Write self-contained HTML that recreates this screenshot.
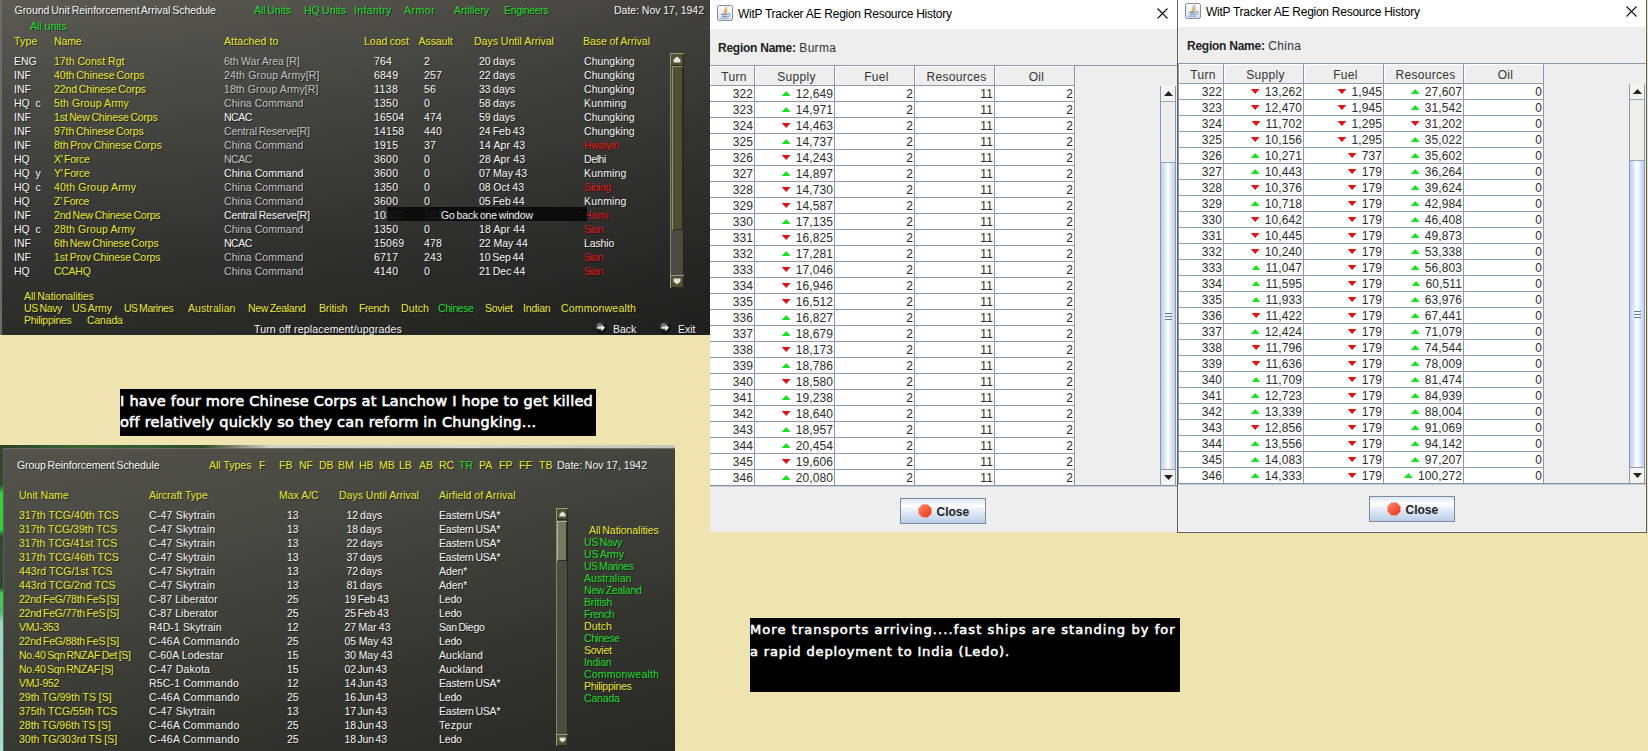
<!DOCTYPE html>
<html><head><meta charset="utf-8"><title>Reinforcements</title><style>
html,body{margin:0;padding:0}
body{width:1648px;height:751px;overflow:hidden;background:#efe3b0;position:relative;font-family:"Liberation Sans",sans-serif}
.a{position:absolute}
.g{position:absolute;white-space:pre;font:10.5px "Liberation Sans",sans-serif;line-height:14px;color:#f6f6f6;text-shadow:1px 1px 0 rgba(0,0,0,.55)}
.y{color:#e9e930}
.gn{color:#22dc2a}
.r{color:#e01818}
.dim{color:#c2c2c2}
#p1{left:0;top:0;width:710px;height:335px;background:linear-gradient(90deg,rgba(0,0,0,0) 0%,rgba(0,0,0,.1) 50%,rgba(0,0,0,.27) 100%),linear-gradient(180deg,#5b5a53 0%,#4d4d48 25%,#41413e 50%,#333332 78%,#2b2b2a 100%);overflow:hidden}
#p2{left:3px;top:448px;width:672px;height:303px;background:linear-gradient(165deg,#54544d 0%,#464640 35%,#34342f 70%,#272725 100%);overflow:hidden;border-top:1px solid #6c6c64;border-left:1px solid #60605a;box-sizing:border-box}
.cm{position:absolute;background:#000;color:#fff;white-space:nowrap;overflow:hidden}
.cm span{position:absolute;left:0}
.win{position:absolute;background:#eeeeee;overflow:hidden}
.tb{position:absolute;left:0;top:0;right:0;background:#fff}
.tt{position:absolute;white-space:nowrap;font:12px/16px "Liberation Sans",sans-serif;color:#000;letter-spacing:-0.26px}
.rn{position:absolute;white-space:nowrap;font:12px/16px "Liberation Sans",sans-serif;color:#333;letter-spacing:.3px}
.rn b{color:#222;letter-spacing:-0.25px}
table.t{position:absolute;border-collapse:collapse;font:12px/13px "Liberation Sans",sans-serif;color:#2c2c2c;table-layout:fixed;letter-spacing:.1px}
table.t td,table.t th{border:1px solid #8c9ab0;height:13px;padding:2px 1px 0 0;text-align:right;background:#fff;overflow:hidden;white-space:nowrap;font-weight:normal}
table.t th{text-align:center;background:#eeeeee;height:16px;padding:3px 0 0 4px;line-height:16px;color:#333;box-shadow:inset 1px 1px 0 #fff;letter-spacing:.3px}
.up,.dn{display:inline-block;width:9px;height:5px;vertical-align:2px;margin-right:5px}
.up{background:#1ee01e;clip-path:polygon(50% 0,100% 100%,0 100%)}
.dn{background:#e01414;clip-path:polygon(0 0,100% 0,50% 100%)}
.sb{position:absolute;width:14px;background:linear-gradient(90deg,#b9cdee,#e4ecf8 30%,#ffffff 50%,#dce6f6 75%,#bccfee);border-left:1px solid #8c9ab0;border-right:1px solid #8c9ab0}
.btn{position:absolute;width:84px;height:24px;border:1px solid #7b8a9b;background:linear-gradient(#dde6f3 0%,#ffffff 28%,#e6edf7 50%,#b9cde9 100%);font:bold 12px/24px "Liberation Sans",sans-serif;color:#222;white-space:nowrap}
</style></head><body>
<div id="p1" class="a">
<div class="a" style="left:0;top:0;width:2px;height:335px;background:#6c6b66"></div><span class="g" style="left:14.5px;top:3px;word-spacing:-1.00px;letter-spacing:-0.03px">Ground Unit Reinforcement Arrival Schedule</span><span class="g gn" style="left:254px;top:3px;word-spacing:-1.00px;letter-spacing:-0.06px">All Units</span><span class="g gn" style="left:304px;top:3px;word-spacing:-0.59px">HQ Units</span><span class="g gn" style="left:354px;top:3px;letter-spacing:0.31px">Infantry</span><span class="g gn" style="left:404px;top:3px;letter-spacing:0.53px">Armor</span><span class="g gn" style="left:454px;top:3px">Artillery</span><span class="g gn" style="left:504px;top:3px;letter-spacing:-0.31px">Engineers</span><span class="g" style="left:614px;top:3px;word-spacing:-0.16px">Date: Nov 17, 1942</span><span class="g gn" style="left:30px;top:19px">All units</span><span class="g y" style="left:14px;top:34px;letter-spacing:0.18px">Type</span><span class="g y" style="left:54px;top:34px;letter-spacing:-0.13px">Name</span><span class="g y" style="left:224px;top:34px;letter-spacing:0.12px">Attached to</span><span class="g y" style="left:364px;top:34px;word-spacing:-0.55px">Load cost</span><span class="g y" style="left:418.5px;top:34px;letter-spacing:-0.06px">Assault</span><span class="g y" style="left:474px;top:34px">Days Until Arrival</span><span class="g y" style="left:583px;top:34px;word-spacing:-0.35px">Base of Arrival</span><span class="g" style="left:14px;top:54px">ENG</span><span class="g y" style="left:54px;top:54px;letter-spacing:0.03px">17th Const Rgt</span><span class="g dim" style="left:224px;top:54px;word-spacing:-0.49px">6th War Area [R]</span><span class="g" style="left:374px;top:54px;letter-spacing:0.21px">764</span><span class="g" style="left:424px;top:54px;letter-spacing:0.21px">2</span><span class="g" style="left:479px;top:54px;word-spacing:-0.53px">20 days</span><span class="g" style="left:584px;top:54px;letter-spacing:0.06px">Chungking</span>
<span class="g" style="left:14px;top:68px">INF</span><span class="g y" style="left:54px;top:68px;word-spacing:-1.00px;letter-spacing:-0.02px">40th Chinese Corps</span><span class="g dim" style="left:224px;top:68px;letter-spacing:0.16px">24th Group Army[R]</span><span class="g" style="left:374px;top:68px;letter-spacing:0.21px">6849</span><span class="g" style="left:424px;top:68px;letter-spacing:0.21px">257</span><span class="g" style="left:479px;top:68px;word-spacing:-0.53px">22 days</span><span class="g" style="left:584px;top:68px;letter-spacing:0.06px">Chungking</span>
<span class="g" style="left:14px;top:82px">INF</span><span class="g y" style="left:54px;top:82px;word-spacing:-1.00px;letter-spacing:-0.11px">22nd Chinese Corps</span><span class="g dim" style="left:224px;top:82px;letter-spacing:0.09px">18th Group Army[R]</span><span class="g" style="left:374px;top:82px;letter-spacing:0.40px">1138</span><span class="g" style="left:424px;top:82px;letter-spacing:0.21px">56</span><span class="g" style="left:479px;top:82px;word-spacing:-0.53px">33 days</span><span class="g" style="left:584px;top:82px;letter-spacing:0.06px">Chungking</span>
<span class="g" style="left:14px;top:96px">HQ  c</span><span class="g y" style="left:54px;top:96px;letter-spacing:0.10px">5th Group Army</span><span class="g dim" style="left:224px;top:96px;letter-spacing:0.05px">China Command</span><span class="g" style="left:374px;top:96px;letter-spacing:0.21px">1350</span><span class="g" style="left:424px;top:96px;letter-spacing:0.21px">0</span><span class="g" style="left:479px;top:96px;word-spacing:-0.53px">58 days</span><span class="g" style="left:584px;top:96px;letter-spacing:0.15px">Kunming</span>
<span class="g" style="left:14px;top:110px">INF</span><span class="g y" style="left:54px;top:110px;word-spacing:-1.00px;letter-spacing:-0.18px">1st New Chinese Corps</span><span class="g" style="left:224px;top:110px;letter-spacing:-0.50px">NCAC</span><span class="g" style="left:374px;top:110px;letter-spacing:0.21px">16504</span><span class="g" style="left:424px;top:110px;letter-spacing:0.21px">474</span><span class="g" style="left:479px;top:110px;word-spacing:-0.53px">59 days</span><span class="g" style="left:584px;top:110px;letter-spacing:0.06px">Chungking</span>
<span class="g" style="left:14px;top:124px">INF</span><span class="g y" style="left:54px;top:124px;word-spacing:-1.00px;letter-spacing:-0.06px">97th Chinese Corps</span><span class="g dim" style="left:224px;top:124px;word-spacing:-1.00px;letter-spacing:-0.14px">Central Reserve[R]</span><span class="g" style="left:374px;top:124px;letter-spacing:0.21px">14158</span><span class="g" style="left:424px;top:124px;letter-spacing:0.21px">440</span><span class="g" style="left:479px;top:124px;word-spacing:-0.90px">24 Feb 43</span><span class="g" style="left:584px;top:124px;letter-spacing:0.06px">Chungking</span>
<span class="g" style="left:14px;top:138px">INF</span><span class="g y" style="left:54px;top:138px;word-spacing:-1.00px;letter-spacing:-0.04px">8th Prov Chinese Corps</span><span class="g dim" style="left:224px;top:138px;letter-spacing:0.05px">China Command</span><span class="g" style="left:374px;top:138px;letter-spacing:0.21px">1915</span><span class="g" style="left:424px;top:138px;letter-spacing:0.21px">37</span><span class="g" style="left:479px;top:138px;letter-spacing:0.14px">14 Apr 43</span><span class="g r" style="left:584px;top:138px;letter-spacing:-0.22px">Hwaiyin</span>
<span class="g" style="left:14px;top:152px">HQ</span><span class="g y" style="left:54px;top:152px;word-spacing:-1.00px;letter-spacing:-0.28px">X&#x27; Force</span><span class="g dim" style="left:224px;top:152px;letter-spacing:-0.50px">NCAC</span><span class="g" style="left:374px;top:152px;letter-spacing:0.21px">3600</span><span class="g" style="left:424px;top:152px;letter-spacing:0.21px">0</span><span class="g" style="left:479px;top:152px;letter-spacing:0.14px">28 Apr 43</span><span class="g" style="left:584px;top:152px;letter-spacing:-0.39px">Delhi</span>
<span class="g" style="left:14px;top:166px">HQ  y</span><span class="g y" style="left:54px;top:166px;word-spacing:-1.00px;letter-spacing:-0.28px">Y&#x27; Force</span><span class="g" style="left:224px;top:166px;letter-spacing:0.05px">China Command</span><span class="g" style="left:374px;top:166px;letter-spacing:0.21px">3600</span><span class="g" style="left:424px;top:166px;letter-spacing:0.21px">0</span><span class="g" style="left:479px;top:166px;word-spacing:-0.52px">07 May 43</span><span class="g" style="left:584px;top:166px;letter-spacing:0.15px">Kunming</span>
<span class="g" style="left:14px;top:180px">HQ  c</span><span class="g y" style="left:54px;top:180px;letter-spacing:0.19px">40th Group Army</span><span class="g dim" style="left:224px;top:180px;letter-spacing:0.05px">China Command</span><span class="g" style="left:374px;top:180px;letter-spacing:0.21px">1350</span><span class="g" style="left:424px;top:180px;letter-spacing:0.21px">0</span><span class="g" style="left:479px;top:180px;word-spacing:-0.27px">08 Oct 43</span><span class="g r" style="left:584px;top:180px;letter-spacing:-0.37px">Sining</span>
<span class="g" style="left:14px;top:194px">HQ</span><span class="g y" style="left:54px;top:194px;word-spacing:-1.00px;letter-spacing:-0.27px">Z&#x27; Force</span><span class="g dim" style="left:224px;top:194px;letter-spacing:0.05px">China Command</span><span class="g" style="left:374px;top:194px;letter-spacing:0.21px">3600</span><span class="g" style="left:424px;top:194px;letter-spacing:0.21px">0</span><span class="g" style="left:479px;top:194px;word-spacing:-0.90px">05 Feb 44</span><span class="g" style="left:584px;top:194px;letter-spacing:0.15px">Kunming</span>
<span class="g" style="left:14px;top:208px">INF</span><span class="g y" style="left:54px;top:208px;word-spacing:-1.00px;letter-spacing:-0.21px">2nd New Chinese Corps</span><span class="g" style="left:224px;top:208px;word-spacing:-1.00px;letter-spacing:-0.14px">Central Reserve[R]</span><span class="g" style="left:374px;top:208px;letter-spacing:0.21px">10302</span><span class="g" style="left:424px;top:208px;letter-spacing:0.21px">182</span><span class="g" style="left:479px;top:208px">27 Feb 44</span><span class="g r" style="left:584px;top:208px">Hami</span>
<span class="g" style="left:14px;top:222px">HQ  c</span><span class="g y" style="left:54px;top:222px;letter-spacing:0.14px">28th Group Army</span><span class="g dim" style="left:224px;top:222px;letter-spacing:0.05px">China Command</span><span class="g" style="left:374px;top:222px;letter-spacing:0.21px">1350</span><span class="g" style="left:424px;top:222px;letter-spacing:0.21px">0</span><span class="g" style="left:479px;top:222px;letter-spacing:0.14px">18 Apr 44</span><span class="g r" style="left:584px;top:222px;letter-spacing:-0.50px">Sian</span>
<span class="g" style="left:14px;top:236px">INF</span><span class="g y" style="left:54px;top:236px;word-spacing:-1.00px;letter-spacing:-0.16px">6th New Chinese Corps</span><span class="g" style="left:224px;top:236px;letter-spacing:-0.50px">NCAC</span><span class="g" style="left:374px;top:236px;letter-spacing:0.21px">15069</span><span class="g" style="left:424px;top:236px;letter-spacing:0.21px">478</span><span class="g" style="left:479px;top:236px;word-spacing:-0.14px">22 May 44</span><span class="g" style="left:584px;top:236px;letter-spacing:-0.12px">Lashio</span>
<span class="g" style="left:14px;top:250px">INF</span><span class="g y" style="left:54px;top:250px;word-spacing:-1.00px;letter-spacing:-0.06px">1st Prov Chinese Corps</span><span class="g dim" style="left:224px;top:250px;letter-spacing:0.05px">China Command</span><span class="g" style="left:374px;top:250px;letter-spacing:0.21px">6717</span><span class="g" style="left:424px;top:250px;letter-spacing:0.21px">243</span><span class="g" style="left:479px;top:250px;word-spacing:-1.00px;letter-spacing:-0.10px">10 Sep 44</span><span class="g r" style="left:584px;top:250px;letter-spacing:-0.50px">Sian</span>
<span class="g" style="left:14px;top:264px">HQ</span><span class="g y" style="left:54px;top:264px;letter-spacing:-0.28px">CCAHQ</span><span class="g dim" style="left:224px;top:264px;letter-spacing:0.05px">China Command</span><span class="g" style="left:374px;top:264px;letter-spacing:0.21px">4140</span><span class="g" style="left:424px;top:264px;letter-spacing:0.21px">0</span><span class="g" style="left:479px;top:264px;word-spacing:-0.81px">21 Dec 44</span><span class="g r" style="left:584px;top:264px;letter-spacing:-0.50px">Sian</span>
<div class="a" style="left:387px;top:207px;width:200px;height:14px;background:rgba(8,8,8,.9)"></div><span class="g" style="left:441px;top:208px;word-spacing:-1.00px;letter-spacing:-0.14px">Go back one window</span><div class="a" style="left:670px;top:53px;width:14px;height:235px;background:#4b4b41;box-shadow:inset 1px 0 0 #83846c,inset -1px 0 0 #26271b"></div><div class="a" style="left:670px;top:53px;width:14px;height:13px;background:#4f522f;box-shadow:inset 1px 1px 0 #9a9b84,inset -1px -1px 0 #26271b"></div><div class="a" style="left:670px;top:275px;width:14px;height:13px;background:#4f522f;box-shadow:inset 1px 1px 0 #9a9b84,inset -1px -1px 0 #26271b"></div><div class="a" style="left:672px;top:66px;width:11px;height:164px;background:#4d502c;box-shadow:inset 1px 1px 0 #8e8f76,inset -1px -1px 0 #2b2c1d"></div><svg class="a" style="left:673px;top:56px" width="8" height="7" viewBox="0 0 8 7"><path d="M0.5 6.5 V3.5 L4 0.5 L7.5 3.5 V6.5 Z" fill="#e4e4dc"/></svg><svg class="a" style="left:673px;top:278px" width="8" height="7" viewBox="0 0 8 7"><path d="M0.5 0.5 V3.5 L4 6.5 L7.5 3.5 V0.5 Z" fill="#e4e4dc"/></svg><span class="g y" style="left:24px;top:289px;word-spacing:-1.00px;letter-spacing:-0.06px">All Nationalities</span><span class="g y" style="left:24px;top:301px;word-spacing:-1.00px;letter-spacing:-0.35px">US Navy</span><span class="g y" style="left:72px;top:301px;word-spacing:-1.00px;letter-spacing:-0.06px">US Army</span><span class="g y" style="left:124px;top:301px;word-spacing:-1.00px;letter-spacing:-0.46px">US Marines</span><span class="g y" style="left:188px;top:301px;letter-spacing:0.08px">Australian</span><span class="g y" style="left:248px;top:301px;word-spacing:-1.00px;letter-spacing:-0.31px">New Zealand</span><span class="g y" style="left:319px;top:301px;letter-spacing:-0.13px">British</span><span class="g y" style="left:359px;top:301px;letter-spacing:-0.41px">French</span><span class="g y" style="left:401px;top:301px;letter-spacing:0.11px">Dutch</span><span class="g gn" style="left:438px;top:301px;letter-spacing:-0.43px">Chinese</span><span class="g y" style="left:485px;top:301px;letter-spacing:-0.24px">Soviet</span><span class="g y" style="left:523px;top:301px;letter-spacing:-0.18px">Indian</span><span class="g y" style="left:561px;top:301px;letter-spacing:0.17px">Commonwealth</span><span class="g y" style="left:24px;top:313px;letter-spacing:-0.30px">Philippines</span><span class="g y" style="left:87px;top:313px;letter-spacing:-0.17px">Canada</span><span class="g" style="left:254px;top:322px;letter-spacing:0.17px">Turn off replacement/upgrades</span><span class="g" style="left:613px;top:322px">Back</span><span class="g" style="left:678px;top:322px">Exit</span><svg width="0" height="0" style="position:absolute"><defs><radialGradient id="sph" cx="35%" cy="25%" r="75%"><stop offset="0" stop-color="#8a8a8a"/><stop offset="0.45" stop-color="#2a2a2a"/><stop offset="1" stop-color="#050505"/></radialGradient></defs></svg><svg class="a" style="left:594.5px;top:322px" width="12" height="12" viewBox="0 0 12 12"><circle cx="6" cy="6" r="5.8" fill="url(#sph)"/><path d="M2.2 4.8 H6.2 V2.4 L10.2 5.8 L6.2 9.2 V6.8 H2.2 Z" fill="#ededed"/></svg><svg class="a" style="left:658.5px;top:322px" width="12" height="12" viewBox="0 0 12 12"><circle cx="6" cy="6" r="5.8" fill="url(#sph)"/><path d="M2.2 4.8 H6.2 V2.4 L10.2 5.8 L6.2 9.2 V6.8 H2.2 Z" fill="#ededed"/></svg></div>
<div class="cm" style="left:120px;top:389px;width:476px;height:47px;font:14.5px/21px 'DejaVu Sans','Liberation Sans',sans-serif;-webkit-text-stroke:0.6px #fff"><span style="top:2px;letter-spacing:0.25px">I have four more Chinese Corps at Lanchow I hope to get killed</span><span style="top:23px;letter-spacing:0.24px">off relatively quickly so they can reform in Chungking...</span></div>
<div class="a" style="left:0;top:445px;width:675px;height:4px;background:linear-gradient(90deg,#2c3f26 0,#3c6434 12%,#2f4a2a 30%,#7f8a72 35%,#cfcfc6 40%,#d6d5cb 70%,#c4c4ba 100%)"></div><div class="a" style="left:0;top:448px;width:4px;height:303px;background:linear-gradient(180deg,#2f4a2a 0,#2f4a2a 12%,#2fd23a 15%,#2fd23a 27%,#2c4a2c 29%,#2c4a2c 46%,#3ad24a 48%,#59b86a 54%,#9fd6c8 58%,#a6dccf 100%)"></div><div id="p2" class="a">
<span class="g" style="left:13px;top:9px;word-spacing:-1.00px;letter-spacing:-0.09px">Group Reinforcement Schedule</span><span class="g y" style="left:205px;top:9px">All Types</span><span class="g y" style="left:255px;top:9px">F</span><span class="g y" style="left:275px;top:9px">FB</span><span class="g y" style="left:295px;top:9px">NF</span><span class="g y" style="left:315px;top:9px">DB</span><span class="g y" style="left:334px;top:9px">BM</span><span class="g y" style="left:355px;top:9px">HB</span><span class="g y" style="left:375px;top:9px">MB</span><span class="g y" style="left:395px;top:9px">LB</span><span class="g y" style="left:415px;top:9px">AB</span><span class="g y" style="left:435px;top:9px">RC</span><span class="g gn" style="left:455px;top:9px">TR</span><span class="g y" style="left:475px;top:9px">PA</span><span class="g y" style="left:495px;top:9px">FP</span><span class="g y" style="left:515px;top:9px">FF</span><span class="g y" style="left:535px;top:9px">TB</span><span class="g" style="left:553px;top:9px;word-spacing:-0.16px">Date: Nov 17, 1942</span><span class="g y" style="left:15px;top:39px">Unit Name</span><span class="g y" style="left:145px;top:39px">Aircraft Type</span><span class="g y" style="left:275px;top:39px">Max A/C</span><span class="g y" style="left:335px;top:39px">Days Until Arrival</span><span class="g y" style="left:435px;top:39px;letter-spacing:0.04px">Airfield of Arrival</span><span class="g y" style="left:15px;top:59px;letter-spacing:0.09px">317th TCG/40th TCS</span><span class="g" style="left:145px;top:59px;letter-spacing:0.20px">C-47 Skytrain</span><span class="g" style="left:283px;top:59px">13</span><span class="g" style="left:342.5px;top:59px;word-spacing:-0.98px">12 days</span><span class="g" style="left:435px;top:59px;word-spacing:-1.00px;letter-spacing:-0.21px">Eastern USA*</span>
<span class="g y" style="left:15px;top:73px;word-spacing:-0.02px">317th TCG/39th TCS</span><span class="g" style="left:145px;top:73px;letter-spacing:0.20px">C-47 Skytrain</span><span class="g" style="left:283px;top:73px">13</span><span class="g" style="left:342.5px;top:73px;word-spacing:-0.98px">18 days</span><span class="g" style="left:435px;top:73px;word-spacing:-1.00px;letter-spacing:-0.21px">Eastern USA*</span>
<span class="g y" style="left:15px;top:87px;letter-spacing:0.03px">317th TCG/41st TCS</span><span class="g" style="left:145px;top:87px;letter-spacing:0.20px">C-47 Skytrain</span><span class="g" style="left:283px;top:87px">13</span><span class="g" style="left:342.5px;top:87px;word-spacing:-0.53px">22 days</span><span class="g" style="left:435px;top:87px;word-spacing:-1.00px;letter-spacing:-0.21px">Eastern USA*</span>
<span class="g y" style="left:15px;top:101px;letter-spacing:0.09px">317th TCG/46th TCS</span><span class="g" style="left:145px;top:101px;letter-spacing:0.20px">C-47 Skytrain</span><span class="g" style="left:283px;top:101px">13</span><span class="g" style="left:342.5px;top:101px;word-spacing:-0.98px">37 days</span><span class="g" style="left:435px;top:101px;word-spacing:-1.00px;letter-spacing:-0.21px">Eastern USA*</span>
<span class="g y" style="left:15px;top:115px;letter-spacing:0.07px">443rd TCG/1st TCS</span><span class="g" style="left:145px;top:115px;letter-spacing:0.20px">C-47 Skytrain</span><span class="g" style="left:283px;top:115px">13</span><span class="g" style="left:342.5px;top:115px;word-spacing:-0.98px">72 days</span><span class="g" style="left:435px;top:115px;letter-spacing:-0.08px">Aden*</span>
<span class="g y" style="left:15px;top:129px;letter-spacing:0.04px">443rd TCG/2nd TCS</span><span class="g" style="left:145px;top:129px;letter-spacing:0.20px">C-47 Skytrain</span><span class="g" style="left:283px;top:129px">13</span><span class="g" style="left:342.5px;top:129px;word-spacing:-0.98px">81 days</span><span class="g" style="left:435px;top:129px;letter-spacing:-0.08px">Aden*</span>
<span class="g y" style="left:15px;top:143px;word-spacing:-1.00px;letter-spacing:-0.24px">22nd FeG/78th FeS [S]</span><span class="g" style="left:145px;top:143px;letter-spacing:0.10px">C-87 Liberator</span><span class="g" style="left:283px;top:143px">25</span><span class="g" style="left:340.5px;top:143px;word-spacing:-1.00px;letter-spacing:-0.13px">19 Feb 43</span><span class="g" style="left:435px;top:143px;letter-spacing:-0.14px">Ledo</span>
<span class="g y" style="left:15px;top:157px;word-spacing:-1.00px;letter-spacing:-0.24px">22nd FeG/77th FeS [S]</span><span class="g" style="left:145px;top:157px;letter-spacing:0.10px">C-87 Liberator</span><span class="g" style="left:283px;top:157px">25</span><span class="g" style="left:340.5px;top:157px;word-spacing:-1.00px;letter-spacing:-0.13px">25 Feb 43</span><span class="g" style="left:435px;top:157px;letter-spacing:-0.14px">Ledo</span>
<span class="g y" style="left:15px;top:171px;letter-spacing:-0.27px">VMJ-353</span><span class="g" style="left:145px;top:171px;letter-spacing:0.11px">R4D-1 Skytrain</span><span class="g" style="left:283px;top:171px">12</span><span class="g" style="left:340.5px;top:171px;word-spacing:-0.64px">27 Mar 43</span><span class="g" style="left:435px;top:171px;word-spacing:-1.00px;letter-spacing:-0.28px">San Diego</span>
<span class="g y" style="left:15px;top:185px;word-spacing:-1.00px;letter-spacing:-0.24px">22nd FeG/88th FeS [S]</span><span class="g" style="left:145px;top:185px;letter-spacing:0.30px">C-46A Commando</span><span class="g" style="left:283px;top:185px">25</span><span class="g" style="left:340.5px;top:185px;word-spacing:-0.47px">05 May 43</span><span class="g" style="left:435px;top:185px;letter-spacing:-0.14px">Ledo</span>
<span class="g y" style="left:15px;top:199px;word-spacing:-1.00px;letter-spacing:-0.30px">No.40 Sqn RNZAF Det [S]</span><span class="g" style="left:145px;top:199px;letter-spacing:0.11px">C-60A Lodestar</span><span class="g" style="left:283px;top:199px">15</span><span class="g" style="left:340.5px;top:199px;word-spacing:-0.47px">30 May 43</span><span class="g" style="left:435px;top:199px;letter-spacing:0.09px">Auckland</span>
<span class="g y" style="left:15px;top:213px;word-spacing:-1.00px;letter-spacing:-0.32px">No.40 Sqn RNZAF [S]</span><span class="g" style="left:145px;top:213px;letter-spacing:0.20px">C-47 Dakota</span><span class="g" style="left:283px;top:213px">15</span><span class="g" style="left:340.5px;top:213px;word-spacing:-1.00px;letter-spacing:-0.19px">02 Jun 43</span><span class="g" style="left:435px;top:213px;letter-spacing:0.09px">Auckland</span>
<span class="g y" style="left:15px;top:227px;letter-spacing:-0.27px">VMJ-952</span><span class="g" style="left:145px;top:227px;letter-spacing:0.17px">R5C-1 Commando</span><span class="g" style="left:283px;top:227px">12</span><span class="g" style="left:340.5px;top:227px;word-spacing:-1.00px;letter-spacing:-0.19px">14 Jun 43</span><span class="g" style="left:435px;top:227px;word-spacing:-1.00px;letter-spacing:-0.21px">Eastern USA*</span>
<span class="g y" style="left:15px;top:241px;word-spacing:-0.13px">29th TG/99th TS [S]</span><span class="g" style="left:145px;top:241px;letter-spacing:0.30px">C-46A Commando</span><span class="g" style="left:283px;top:241px">25</span><span class="g" style="left:340.5px;top:241px;word-spacing:-1.00px;letter-spacing:-0.19px">16 Jun 43</span><span class="g" style="left:435px;top:241px;letter-spacing:-0.14px">Ledo</span>
<span class="g y" style="left:15px;top:255px;word-spacing:-0.02px">375th TCG/55th TCS</span><span class="g" style="left:145px;top:255px;letter-spacing:0.20px">C-47 Skytrain</span><span class="g" style="left:283px;top:255px">13</span><span class="g" style="left:340.5px;top:255px;word-spacing:-1.00px;letter-spacing:-0.19px">17 Jun 43</span><span class="g" style="left:435px;top:255px;word-spacing:-1.00px;letter-spacing:-0.21px">Eastern USA*</span>
<span class="g y" style="left:15px;top:269px;word-spacing:-0.37px">28th TG/96th TS [S]</span><span class="g" style="left:145px;top:269px;letter-spacing:0.30px">C-46A Commando</span><span class="g" style="left:283px;top:269px">25</span><span class="g" style="left:340.5px;top:269px;word-spacing:-1.00px;letter-spacing:-0.19px">18 Jun 43</span><span class="g" style="left:435px;top:269px;letter-spacing:0.33px">Tezpur</span>
<span class="g y" style="left:15px;top:283px;word-spacing:-0.41px">30th TG/303rd TS [S]</span><span class="g" style="left:145px;top:283px;letter-spacing:0.30px">C-46A Commando</span><span class="g" style="left:283px;top:283px">25</span><span class="g" style="left:340.5px;top:283px;word-spacing:-1.00px;letter-spacing:-0.19px">18 Jun 43</span><span class="g" style="left:435px;top:283px;letter-spacing:-0.14px">Ledo</span>
<div class="a" style="left:552px;top:59px;width:12px;height:238px;background:#4b4b41;box-shadow:inset 1px 0 0 #83846c,inset -1px 0 0 #26271b"></div><div class="a" style="left:552px;top:59px;width:12px;height:12px;background:#4f522f;box-shadow:inset 1px 1px 0 #9a9b84,inset -1px -1px 0 #26271b"></div><div class="a" style="left:552px;top:285px;width:12px;height:12px;background:#4f522f;box-shadow:inset 1px 1px 0 #9a9b84,inset -1px -1px 0 #26271b"></div><div class="a" style="left:553px;top:72px;width:10px;height:40px;background:#777a5c;box-shadow:inset 1px 1px 0 #b4b5a0,inset -1px -1px 0 #2b2c1d"></div><svg class="a" style="left:554.5px;top:62px" width="7" height="6" viewBox="0 0 8 7"><path d="M0.5 6.5 V3.5 L4 0.5 L7.5 3.5 V6.5 Z" fill="#e4e4dc"/></svg><svg class="a" style="left:554.5px;top:288px" width="7" height="6" viewBox="0 0 8 7"><path d="M0.5 0.5 V3.5 L4 6.5 L7.5 3.5 V0.5 Z" fill="#e4e4dc"/></svg><span class="g y" style="left:585px;top:74px;word-spacing:-1.00px;letter-spacing:-0.06px">All Nationalities</span><span class="g gn" style="left:580px;top:86px;word-spacing:-1.00px;letter-spacing:-0.35px">US Navy</span><span class="g gn" style="left:580px;top:98px;word-spacing:-1.00px;letter-spacing:-0.06px">US Army</span><span class="g gn" style="left:580px;top:110px;word-spacing:-1.00px;letter-spacing:-0.46px">US Marines</span><span class="g gn" style="left:580px;top:122px;letter-spacing:0.08px">Australian</span><span class="g gn" style="left:580px;top:134px;word-spacing:-1.00px;letter-spacing:-0.31px">New Zealand</span><span class="g gn" style="left:580px;top:146px;letter-spacing:-0.13px">British</span><span class="g gn" style="left:580px;top:158px;letter-spacing:-0.41px">French</span><span class="g y" style="left:580px;top:170px;letter-spacing:0.11px">Dutch</span><span class="g gn" style="left:580px;top:182px;letter-spacing:-0.43px">Chinese</span><span class="g y" style="left:580px;top:194px;letter-spacing:-0.24px">Soviet</span><span class="g gn" style="left:580px;top:206px;letter-spacing:-0.18px">Indian</span><span class="g gn" style="left:580px;top:218px;letter-spacing:0.17px">Commonwealth</span><span class="g y" style="left:580px;top:230px;letter-spacing:-0.30px">Philippines</span><span class="g gn" style="left:580px;top:242px;letter-spacing:-0.17px">Canada</span></div>
<div class="cm" style="left:750px;top:618px;width:430px;height:74px;font:13px/21px 'DejaVu Sans','Liberation Sans',sans-serif;-webkit-text-stroke:0.55px #fff"><span style="top:1px;letter-spacing:1.07px">More transports arriving....fast ships are standing by for</span><span style="top:23px;letter-spacing:0.85px">a rapid deployment to India (Ledo).</span></div>
<div class="win" style="left:710px;top:0;width:467px;height:532px;"><div class="tb" style="height:29px"></div><svg class="a" style="left:7px;top:5px" width="16" height="16" viewBox="0 0 16 16"><defs><linearGradient id="jb" x1="0" y1="0" x2="0" y2="1"><stop offset="0" stop-color="#ffffff"/><stop offset="1" stop-color="#d3e0ee"/></linearGradient></defs><rect x="0.5" y="0.5" width="15" height="15" rx="1.8" fill="url(#jb)" stroke="#7f8d9c"/><path d="M9.9 2.3 C6 4.8 9.6 6 6.6 8.6 M10.8 4.4 C8.2 6 10 7 8.2 8.6" stroke="#e8903a" stroke-width="1.1" fill="none"/><path d="M4 9.3 H10.8 M5 11.2 H9.8" stroke="#5c7b9a" stroke-width="1.1" fill="none"/><path d="M3.2 13.2 H11.6" stroke="#8da3b8" stroke-width="1" fill="none"/><path d="M10.8 8.5 C13.8 8.3 13.8 11.2 10.4 11.6" stroke="#6f8eae" stroke-width="1" fill="none"/></svg><span class="tt" style="left:28px;top:6px">WitP Tracker AE Region Resource History</span><svg class="a" style="left:447px;top:8px" width="11" height="11" viewBox="0 0 11 11"><path d="M0.5 0.5 L10.5 10.5 M10.5 0.5 L0.5 10.5" stroke="#111" stroke-width="1.1"/></svg><span class="rn" style="left:8px;top:40px"><b>Region Name:</b> Burma</span><div class="a" style="left:0;top:65px;width:467px;height:1px;background:#8c9ab0"></div><table class="t" style="left:-1px;top:65px;width:365px"><colgroup><col style="width:45px"><col style="width:80px"><col style="width:80px"><col style="width:80px"><col style="width:80px"></colgroup><tr><th>Turn</th><th>Supply</th><th>Fuel</th><th>Resources</th><th>Oil</th></tr>
<tr><td>322</td><td><i class="up"></i>12,649</td><td>2</td><td>11</td><td>2</td></tr>
<tr><td>323</td><td><i class="up"></i>14,971</td><td>2</td><td>11</td><td>2</td></tr>
<tr><td>324</td><td><i class="dn"></i>14,463</td><td>2</td><td>11</td><td>2</td></tr>
<tr><td>325</td><td><i class="up"></i>14,737</td><td>2</td><td>11</td><td>2</td></tr>
<tr><td>326</td><td><i class="dn"></i>14,243</td><td>2</td><td>11</td><td>2</td></tr>
<tr><td>327</td><td><i class="up"></i>14,897</td><td>2</td><td>11</td><td>2</td></tr>
<tr><td>328</td><td><i class="dn"></i>14,730</td><td>2</td><td>11</td><td>2</td></tr>
<tr><td>329</td><td><i class="dn"></i>14,587</td><td>2</td><td>11</td><td>2</td></tr>
<tr><td>330</td><td><i class="up"></i>17,135</td><td>2</td><td>11</td><td>2</td></tr>
<tr><td>331</td><td><i class="dn"></i>16,825</td><td>2</td><td>11</td><td>2</td></tr>
<tr><td>332</td><td><i class="up"></i>17,281</td><td>2</td><td>11</td><td>2</td></tr>
<tr><td>333</td><td><i class="dn"></i>17,046</td><td>2</td><td>11</td><td>2</td></tr>
<tr><td>334</td><td><i class="dn"></i>16,946</td><td>2</td><td>11</td><td>2</td></tr>
<tr><td>335</td><td><i class="dn"></i>16,512</td><td>2</td><td>11</td><td>2</td></tr>
<tr><td>336</td><td><i class="up"></i>16,827</td><td>2</td><td>11</td><td>2</td></tr>
<tr><td>337</td><td><i class="up"></i>18,679</td><td>2</td><td>11</td><td>2</td></tr>
<tr><td>338</td><td><i class="dn"></i>18,173</td><td>2</td><td>11</td><td>2</td></tr>
<tr><td>339</td><td><i class="up"></i>18,786</td><td>2</td><td>11</td><td>2</td></tr>
<tr><td>340</td><td><i class="dn"></i>18,580</td><td>2</td><td>11</td><td>2</td></tr>
<tr><td>341</td><td><i class="up"></i>19,238</td><td>2</td><td>11</td><td>2</td></tr>
<tr><td>342</td><td><i class="dn"></i>18,640</td><td>2</td><td>11</td><td>2</td></tr>
<tr><td>343</td><td><i class="up"></i>18,957</td><td>2</td><td>11</td><td>2</td></tr>
<tr><td>344</td><td><i class="up"></i>20,454</td><td>2</td><td>11</td><td>2</td></tr>
<tr><td>345</td><td><i class="dn"></i>19,606</td><td>2</td><td>11</td><td>2</td></tr>
<tr><td>346</td><td><i class="up"></i>20,080</td><td>2</td><td>11</td><td>2</td></tr>
</table><div class="sb" style="left:450px;top:86px;height:399px"></div><div class="a" style="left:451px;top:86px;width:14px;height:15px;background:#f3f3f3;border-bottom:1px solid #9aa6b8"></div><div class="a" style="left:451px;top:469px;width:14px;height:15px;background:#f3f3f3;border-top:1px solid #8c9ab0"></div><div class="a" style="left:451px;top:102px;width:14px;height:60px;background:#eeeeee;border-bottom:1px solid #8ea4cc"></div><svg class="a" style="left:454px;top:91px" width="9" height="5" viewBox="0 0 9 5"><path d="M0 5 L4.5 0 L9 5 Z" fill="#222"/></svg><svg class="a" style="left:454px;top:475px" width="9" height="5" viewBox="0 0 9 5"><path d="M0 0 L9 0 L4.5 5 Z" fill="#222"/></svg><div class="a" style="left:455px;top:313px;width:7px;height:5px;border-top:1px solid #6a7a9a;border-bottom:1px solid #6a7a9a"><div style="height:1px;margin-top:2px;background:#6a7a9a"></div></div><div class="a" style="left:0;top:485px;width:467px;height:1px;background:#8592a6"></div><div class="a" style="left:0;top:486px;width:467px;height:1px;background:#c4cad4"></div><div class="btn" style="left:190px;top:498px"><svg class="a" style="left:17px;top:5px" width="14" height="14" viewBox="0 0 15 15"><defs><linearGradient id="ogb" x1="0" y1="0" x2="1" y2="1"><stop offset="0" stop-color="#ff8a62"/><stop offset="1" stop-color="#e6321c"/></linearGradient></defs><path d="M4.6 0.6 H10.4 L14.4 4.6 V10.4 L10.4 14.4 H4.6 L0.6 10.4 V4.6 Z" fill="url(#ogb)" stroke="#f3a593" stroke-width="0.8"/></svg><span class="a" style="left:35.5px;top:1px">Close</span></div></div>
<div class="win" style="left:1177px;top:0;width:470px;height:533px;border:1px solid #5e5e5e;border-top:none;box-sizing:border-box;box-shadow:inset 1px -1px 0 #f8f8f8"><div class="tb" style="height:27px"></div><svg class="a" style="left:7px;top:3px" width="16" height="16" viewBox="0 0 16 16"><defs><linearGradient id="jb" x1="0" y1="0" x2="0" y2="1"><stop offset="0" stop-color="#ffffff"/><stop offset="1" stop-color="#d3e0ee"/></linearGradient></defs><rect x="0.5" y="0.5" width="15" height="15" rx="1.8" fill="url(#jb)" stroke="#7f8d9c"/><path d="M9.9 2.3 C6 4.8 9.6 6 6.6 8.6 M10.8 4.4 C8.2 6 10 7 8.2 8.6" stroke="#e8903a" stroke-width="1.1" fill="none"/><path d="M4 9.3 H10.8 M5 11.2 H9.8" stroke="#5c7b9a" stroke-width="1.1" fill="none"/><path d="M3.2 13.2 H11.6" stroke="#8da3b8" stroke-width="1" fill="none"/><path d="M10.8 8.5 C13.8 8.3 13.8 11.2 10.4 11.6" stroke="#6f8eae" stroke-width="1" fill="none"/></svg><span class="tt" style="left:28px;top:4px">WitP Tracker AE Region Resource History</span><svg class="a" style="left:448px;top:6px" width="11" height="11" viewBox="0 0 11 11"><path d="M0.5 0.5 L10.5 10.5 M10.5 0.5 L0.5 10.5" stroke="#111" stroke-width="1.1"/></svg><span class="rn" style="left:9px;top:38px"><b>Region Name:</b> China</span><div class="a" style="left:0;top:63px;width:470px;height:1px;background:#8c9ab0"></div><table class="t" style="left:0px;top:63px;width:365px"><colgroup><col style="width:45px"><col style="width:80px"><col style="width:80px"><col style="width:80px"><col style="width:80px"></colgroup><tr><th>Turn</th><th>Supply</th><th>Fuel</th><th>Resources</th><th>Oil</th></tr>
<tr><td>322</td><td><i class="dn"></i>13,262</td><td><i class="dn"></i>1,945</td><td><i class="up"></i>27,607</td><td>0</td></tr>
<tr><td>323</td><td><i class="dn"></i>12,470</td><td><i class="dn"></i>1,945</td><td><i class="up"></i>31,542</td><td>0</td></tr>
<tr><td>324</td><td><i class="dn"></i>11,702</td><td><i class="dn"></i>1,295</td><td><i class="dn"></i>31,202</td><td>0</td></tr>
<tr><td>325</td><td><i class="dn"></i>10,156</td><td><i class="dn"></i>1,295</td><td><i class="up"></i>35,022</td><td>0</td></tr>
<tr><td>326</td><td><i class="up"></i>10,271</td><td><i class="dn"></i>737</td><td><i class="up"></i>35,602</td><td>0</td></tr>
<tr><td>327</td><td><i class="up"></i>10,443</td><td><i class="dn"></i>179</td><td><i class="up"></i>36,264</td><td>0</td></tr>
<tr><td>328</td><td><i class="dn"></i>10,376</td><td><i class="dn"></i>179</td><td><i class="up"></i>39,624</td><td>0</td></tr>
<tr><td>329</td><td><i class="up"></i>10,718</td><td><i class="dn"></i>179</td><td><i class="up"></i>42,984</td><td>0</td></tr>
<tr><td>330</td><td><i class="dn"></i>10,642</td><td><i class="dn"></i>179</td><td><i class="up"></i>46,408</td><td>0</td></tr>
<tr><td>331</td><td><i class="dn"></i>10,445</td><td><i class="dn"></i>179</td><td><i class="up"></i>49,873</td><td>0</td></tr>
<tr><td>332</td><td><i class="dn"></i>10,240</td><td><i class="dn"></i>179</td><td><i class="up"></i>53,338</td><td>0</td></tr>
<tr><td>333</td><td><i class="up"></i>11,047</td><td><i class="dn"></i>179</td><td><i class="up"></i>56,803</td><td>0</td></tr>
<tr><td>334</td><td><i class="up"></i>11,595</td><td><i class="dn"></i>179</td><td><i class="up"></i>60,511</td><td>0</td></tr>
<tr><td>335</td><td><i class="up"></i>11,933</td><td><i class="dn"></i>179</td><td><i class="up"></i>63,976</td><td>0</td></tr>
<tr><td>336</td><td><i class="dn"></i>11,422</td><td><i class="dn"></i>179</td><td><i class="up"></i>67,441</td><td>0</td></tr>
<tr><td>337</td><td><i class="up"></i>12,424</td><td><i class="dn"></i>179</td><td><i class="up"></i>71,079</td><td>0</td></tr>
<tr><td>338</td><td><i class="dn"></i>11,796</td><td><i class="dn"></i>179</td><td><i class="up"></i>74,544</td><td>0</td></tr>
<tr><td>339</td><td><i class="dn"></i>11,636</td><td><i class="dn"></i>179</td><td><i class="up"></i>78,009</td><td>0</td></tr>
<tr><td>340</td><td><i class="up"></i>11,709</td><td><i class="dn"></i>179</td><td><i class="up"></i>81,474</td><td>0</td></tr>
<tr><td>341</td><td><i class="up"></i>12,723</td><td><i class="dn"></i>179</td><td><i class="up"></i>84,939</td><td>0</td></tr>
<tr><td>342</td><td><i class="up"></i>13,339</td><td><i class="dn"></i>179</td><td><i class="up"></i>88,004</td><td>0</td></tr>
<tr><td>343</td><td><i class="dn"></i>12,856</td><td><i class="dn"></i>179</td><td><i class="up"></i>91,069</td><td>0</td></tr>
<tr><td>344</td><td><i class="up"></i>13,556</td><td><i class="dn"></i>179</td><td><i class="up"></i>94,142</td><td>0</td></tr>
<tr><td>345</td><td><i class="up"></i>14,083</td><td><i class="dn"></i>179</td><td><i class="up"></i>97,207</td><td>0</td></tr>
<tr><td>346</td><td><i class="up"></i>14,333</td><td><i class="dn"></i>179</td><td><i class="up"></i>100,272</td><td>0</td></tr>
</table><div class="sb" style="left:451px;top:84px;height:399px"></div><div class="a" style="left:452px;top:84px;width:14px;height:15px;background:#f3f3f3;border-bottom:1px solid #9aa6b8"></div><div class="a" style="left:452px;top:467px;width:14px;height:15px;background:#f3f3f3;border-top:1px solid #8c9ab0"></div><div class="a" style="left:452px;top:100px;width:14px;height:60px;background:#eeeeee;border-bottom:1px solid #8ea4cc"></div><svg class="a" style="left:455px;top:89px" width="9" height="5" viewBox="0 0 9 5"><path d="M0 5 L4.5 0 L9 5 Z" fill="#222"/></svg><svg class="a" style="left:455px;top:473px" width="9" height="5" viewBox="0 0 9 5"><path d="M0 0 L9 0 L4.5 5 Z" fill="#222"/></svg><div class="a" style="left:456px;top:311px;width:7px;height:5px;border-top:1px solid #6a7a9a;border-bottom:1px solid #6a7a9a"><div style="height:1px;margin-top:2px;background:#6a7a9a"></div></div><div class="a" style="left:0;top:483px;width:470px;height:1px;background:#8592a6"></div><div class="a" style="left:0;top:484px;width:470px;height:1px;background:#c4cad4"></div><div class="btn" style="left:191px;top:496px"><svg class="a" style="left:17px;top:5px" width="14" height="14" viewBox="0 0 15 15"><defs><linearGradient id="ogc" x1="0" y1="0" x2="1" y2="1"><stop offset="0" stop-color="#ff8a62"/><stop offset="1" stop-color="#e6321c"/></linearGradient></defs><path d="M4.6 0.6 H10.4 L14.4 4.6 V10.4 L10.4 14.4 H4.6 L0.6 10.4 V4.6 Z" fill="url(#ogc)" stroke="#f3a593" stroke-width="0.8"/></svg><span class="a" style="left:35.5px;top:1px">Close</span></div></div>
</body></html>
